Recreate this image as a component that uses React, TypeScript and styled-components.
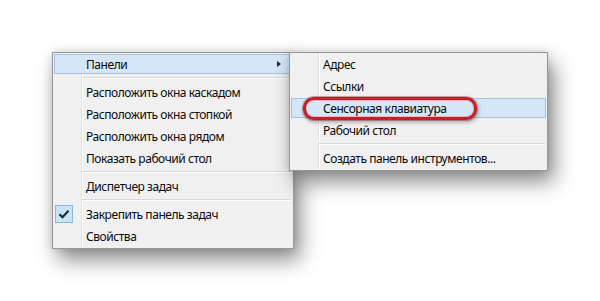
import React from "react";
import styled, { createGlobalStyle, css } from "styled-components";

const GlobalStyle = createGlobalStyle`
  html, body { margin: 0; padding: 0; background: #ffffff; }
  body { font-family: "Noto Sans", "Open Sans", sans-serif; }
`;

const Stage = styled.div`
  width: 600px;
  height: 301px;
  padding: 52px 0 0 52px;
  box-sizing: border-box;
  overflow: hidden;
`;

const MenuWrap = styled.div`
  position: relative;
  width: max-content;
`;

const Menu = styled.div<{ $width: number; $overlay?: boolean }>`
  box-sizing: border-box;
  width: ${(p) => p.$width}px;
  padding: 0 0 1px 0;
  border: 1px solid #979797;
  background: linear-gradient(
    to right,
    #f0f0f0 0,
    #f0f0f0 28px,
    #e2e2e2 28px,
    #e2e2e2 29px,
    #ffffff 29px,
    #ffffff 30px,
    #f0f0f0 30px
  );
  box-shadow: 0 0 8px rgba(0, 0, 0, 0.14), 6px 11px 20px rgba(0, 0, 0, 0.45);
  display: flex;
  flex-direction: column;
  ${(p) =>
    p.$overlay &&
    css`
      position: absolute;
      top: 0;
      left: 237px;
    `}
`;

const Item = styled.div<{ $active?: boolean }>`
  position: relative;
  height: 22px;
  display: flex;
  align-items: center;
  padding: 0 12px 0 33px;
  font-size: 12px;
  letter-spacing: -0.45px;
  color: #0a0a0a;
  white-space: nowrap;
  ${(p) =>
    p.$active &&
    css`
      &::before {
        content: "";
        position: absolute;
        left: 1px;
        right: 1px;
        top: 1px;
        bottom: 1px;
        background: #d5e6f6;
        border: 1px solid #a6c4e2;
      }
    `}
`;

const Label = styled.span`
  position: relative;
  z-index: 1;
`;

const Arrow = styled.span`
  position: relative;
  z-index: 1;
  margin-left: auto;
  width: 0;
  height: 0;
  border-top: 3.5px solid transparent;
  border-bottom: 3.5px solid transparent;
  border-left: 4px solid #222;
`;

const Separator = styled.div`
  height: 6px;
  margin-left: 29px;
  margin-right: 2px;
  display: flex;
  flex-direction: column;
  padding-top: 2px;
  box-sizing: border-box;
  &::before {
    content: "";
    height: 1px;
    background: #d9d9d9;
  }
  &::after {
    content: "";
    height: 1px;
    background: #ffffff;
  }
`;

const CheckBox = styled.span`
  position: absolute;
  left: 2px;
  top: 2px;
  width: 18px;
  height: 18px;
  box-sizing: border-box;
  background: #c9e4f6;
  border: 1px solid #86bbe0;
  display: flex;
  align-items: center;
  justify-content: center;
`;

const Callout = styled.span`
  position: absolute;
  left: 13px;
  top: 0;
  width: 174px;
  height: 23px;
  box-sizing: border-box;
  border: 3px solid #c41e2a;
  border-radius: 11px;
  box-shadow: 0 0 0 1px rgba(120, 0, 0, 0.3), 1px 2px 4px rgba(0, 0, 0, 0.35),
    inset 0 0 0 1px rgba(255, 150, 150, 0.6);
  z-index: 2;
  pointer-events: none;
`;

const Check = () => (
  <svg width="12" height="10" viewBox="0 0 12 10">
    <path d="M1.5 5.2 L4.5 8.2 L10.5 1.8" fill="none" stroke="#1a2a3a" strokeWidth="2.2" />
  </svg>
);

export default function App() {
  return (
    <Stage>
      <GlobalStyle />
      <MenuWrap>
        <Menu $width={242}>
          <Item $active>
            <Label>Панели</Label>
            <Arrow />
          </Item>
          <Separator />
          <Item>
            <Label>Расположить окна каскадом</Label>
          </Item>
          <Item>
            <Label>Расположить окна стопкой</Label>
          </Item>
          <Item>
            <Label>Расположить окна рядом</Label>
          </Item>
          <Item>
            <Label>Показать рабочий стол</Label>
          </Item>
          <Separator />
          <Item>
            <Label>Диспетчер задач</Label>
          </Item>
          <Separator />
          <Item>
            <CheckBox>
              <Check />
            </CheckBox>
            <Label>Закрепить панель задач</Label>
          </Item>
          <Item>
            <Label>Свойства</Label>
          </Item>
        </Menu>
        <Menu $width={259} $overlay>
          <Item>
            <Label>Адрес</Label>
          </Item>
          <Item>
            <Label>Ссылки</Label>
          </Item>
          <Item $active>
            <Callout />
            <Label>Сенсорная клавиатура</Label>
          </Item>
          <Item>
            <Label>Рабочий стол</Label>
          </Item>
          <Separator />
          <Item>
            <Label>Создать панель инструментов...</Label>
          </Item>
        </Menu>
      </MenuWrap>
    </Stage>
  );
}
